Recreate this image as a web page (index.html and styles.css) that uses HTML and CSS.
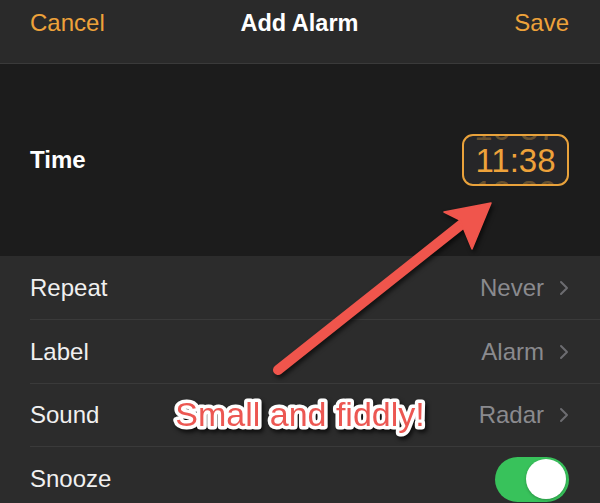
FILE: index.html
```html
<!DOCTYPE html>
<html>
<head>
<meta charset="utf-8">
<link rel="stylesheet" href="styles.css">
</head>
<body>
<div class="screen">
  <header class="nav">
    <span class="nav-btn nav-left">Cancel</span>
    <span class="nav-title">Add Alarm</span>
    <span class="nav-btn nav-right">Save</span>
  </header>
  <section class="time-section">
    <span class="time-label">Time</span>
    <div class="picker">
      <div class="wheel">
        <div class="wheel-row faint">10&nbsp;37</div>
        <div class="wheel-row main">11:38</div>
        <div class="wheel-row faint">12&nbsp;39</div>
      </div>
    </div>
  </section>
  <ul class="rows">
    <li class="row"><span class="row-label">Repeat</span><span class="row-value">Never<svg class="chev" viewBox="0 0 10 16"><path d="M2 2l6 6-6 6" /></svg></span></li>
    <li class="row"><span class="row-label">Label</span><span class="row-value">Alarm<svg class="chev" viewBox="0 0 10 16"><path d="M2 2l6 6-6 6" /></svg></span></li>
    <li class="row"><span class="row-label">Sound</span><span class="row-value">Radar<svg class="chev" viewBox="0 0 10 16"><path d="M2 2l6 6-6 6" /></svg></span></li>
    <li class="row"><span class="row-label">Snooze</span><span class="toggle"><span class="knob"></span></span></li>
  </ul>
  <svg class="annotation" viewBox="0 0 600 503" width="600" height="503">
    <g class="arrow">
      <line x1="278" y1="370" x2="462" y2="224" />
      <polygon points="491,203 444,212 460,220 472,249" />
    </g>
    <text class="callout" x="300" y="426" text-anchor="middle">Small and fiddly!</text>
  </svg>
</div>
</body>
</html>
```
FILE: styles.css
```css
* { box-sizing: border-box; }
html, body {
  margin: 0;
  padding: 0;
  background: #2c2c2c;
}
.screen {
  position: relative;
  width: 600px;
  height: 503px;
  overflow: hidden;
  font-family: "Liberation Sans", Arial, sans-serif;
  background: #2c2c2c;
}
.nav {
  height: 64px;
  background: #2a2a2a;
  border-bottom: 1px solid #3a3a3a;
  display: grid;
  grid-template-columns: 1fr auto 1fr;
  align-items: start;
  padding: 6px 31px 0 30px;
  font-size: 24px;
  line-height: 34px;
}
.nav-btn { color: #eea23a; }
.nav-left { justify-self: start; }
.nav-right { justify-self: end; }
.nav-title {
  color: #ffffff;
  font-weight: bold;
  font-size: 23.5px;
}
.time-section {
  height: 192px;
  background: #1c1c1c;
  display: flex;
  align-items: center;
  justify-content: space-between;
  padding: 0 31px 0 30px;
}
.time-label {
  color: #ffffff;
  font-weight: bold;
  font-size: 24px;
}
.picker {
  width: 107px;
  height: 52px;
  border: 2px solid #e9a23b;
  border-radius: 11px;
  background: #262628;
  overflow: hidden;
  display: flex;
  flex-direction: column;
  justify-content: center;
  align-items: center;
}
.wheel {
  display: flex;
  flex-direction: column;
  align-items: center;
  flex-shrink: 0;
}
.wheel-row {
  font-size: 33px;
  white-space: nowrap;
  color: #eea23a;
}
.wheel-row.faint {
  line-height: 33px;
  color: rgba(200, 145, 60, 0.42);
}
.wheel-row.main {
  line-height: 31px;
}
.rows {
  list-style: none;
  margin: 0;
  padding: 0;
}
.row {
  height: 64px;
  margin-left: 30px;
  padding-right: 31px;
  display: flex;
  align-items: center;
  justify-content: space-between;
  border-bottom: 1px solid #3a3a3a;
  font-size: 24px;
}
.row:nth-child(3) { height: 63px; }
.row:last-child { border-bottom: none; }
.row-label { color: #f0f0f0; }
.row-value {
  color: #8a8a8e;
  display: flex;
  align-items: center;
  gap: 15px;
}
.chev {
  width: 10px;
  height: 16px;
  fill: none;
  stroke: #6c6c70;
  stroke-width: 2;
  stroke-linecap: round;
  stroke-linejoin: round;
}
.toggle {
  width: 74px;
  height: 45px;
  border-radius: 23px;
  background: #38c25b;
  display: flex;
  align-items: center;
  justify-content: flex-end;
  padding: 2px 3px;
}
.knob {
  width: 40px;
  height: 40px;
  border-radius: 50%;
  background: #ffffff;
  box-shadow: 0 1px 3px rgba(0,0,0,0.25);
}
.annotation {
  position: absolute;
  left: 0;
  top: 0;
  pointer-events: none;
}
.arrow {
  filter: drop-shadow(2px 3px 2px rgba(0,0,0,0.6));
}
.arrow line {
  stroke: #f0554c;
  stroke-width: 10;
  stroke-linecap: round;
}
.arrow polygon {
  fill: #f0554c;
  stroke: #f0554c;
  stroke-width: 1.5;
  stroke-linejoin: round;
}
.callout {
  font-family: "Liberation Sans", Arial, sans-serif;
  font-size: 34px;
  fill: #ec5752;
  stroke: #ffffff;
  stroke-width: 7px;
  stroke-linejoin: round;
  paint-order: stroke;
  filter: drop-shadow(2px 3px 2px rgba(0,0,0,0.7));
}
```
